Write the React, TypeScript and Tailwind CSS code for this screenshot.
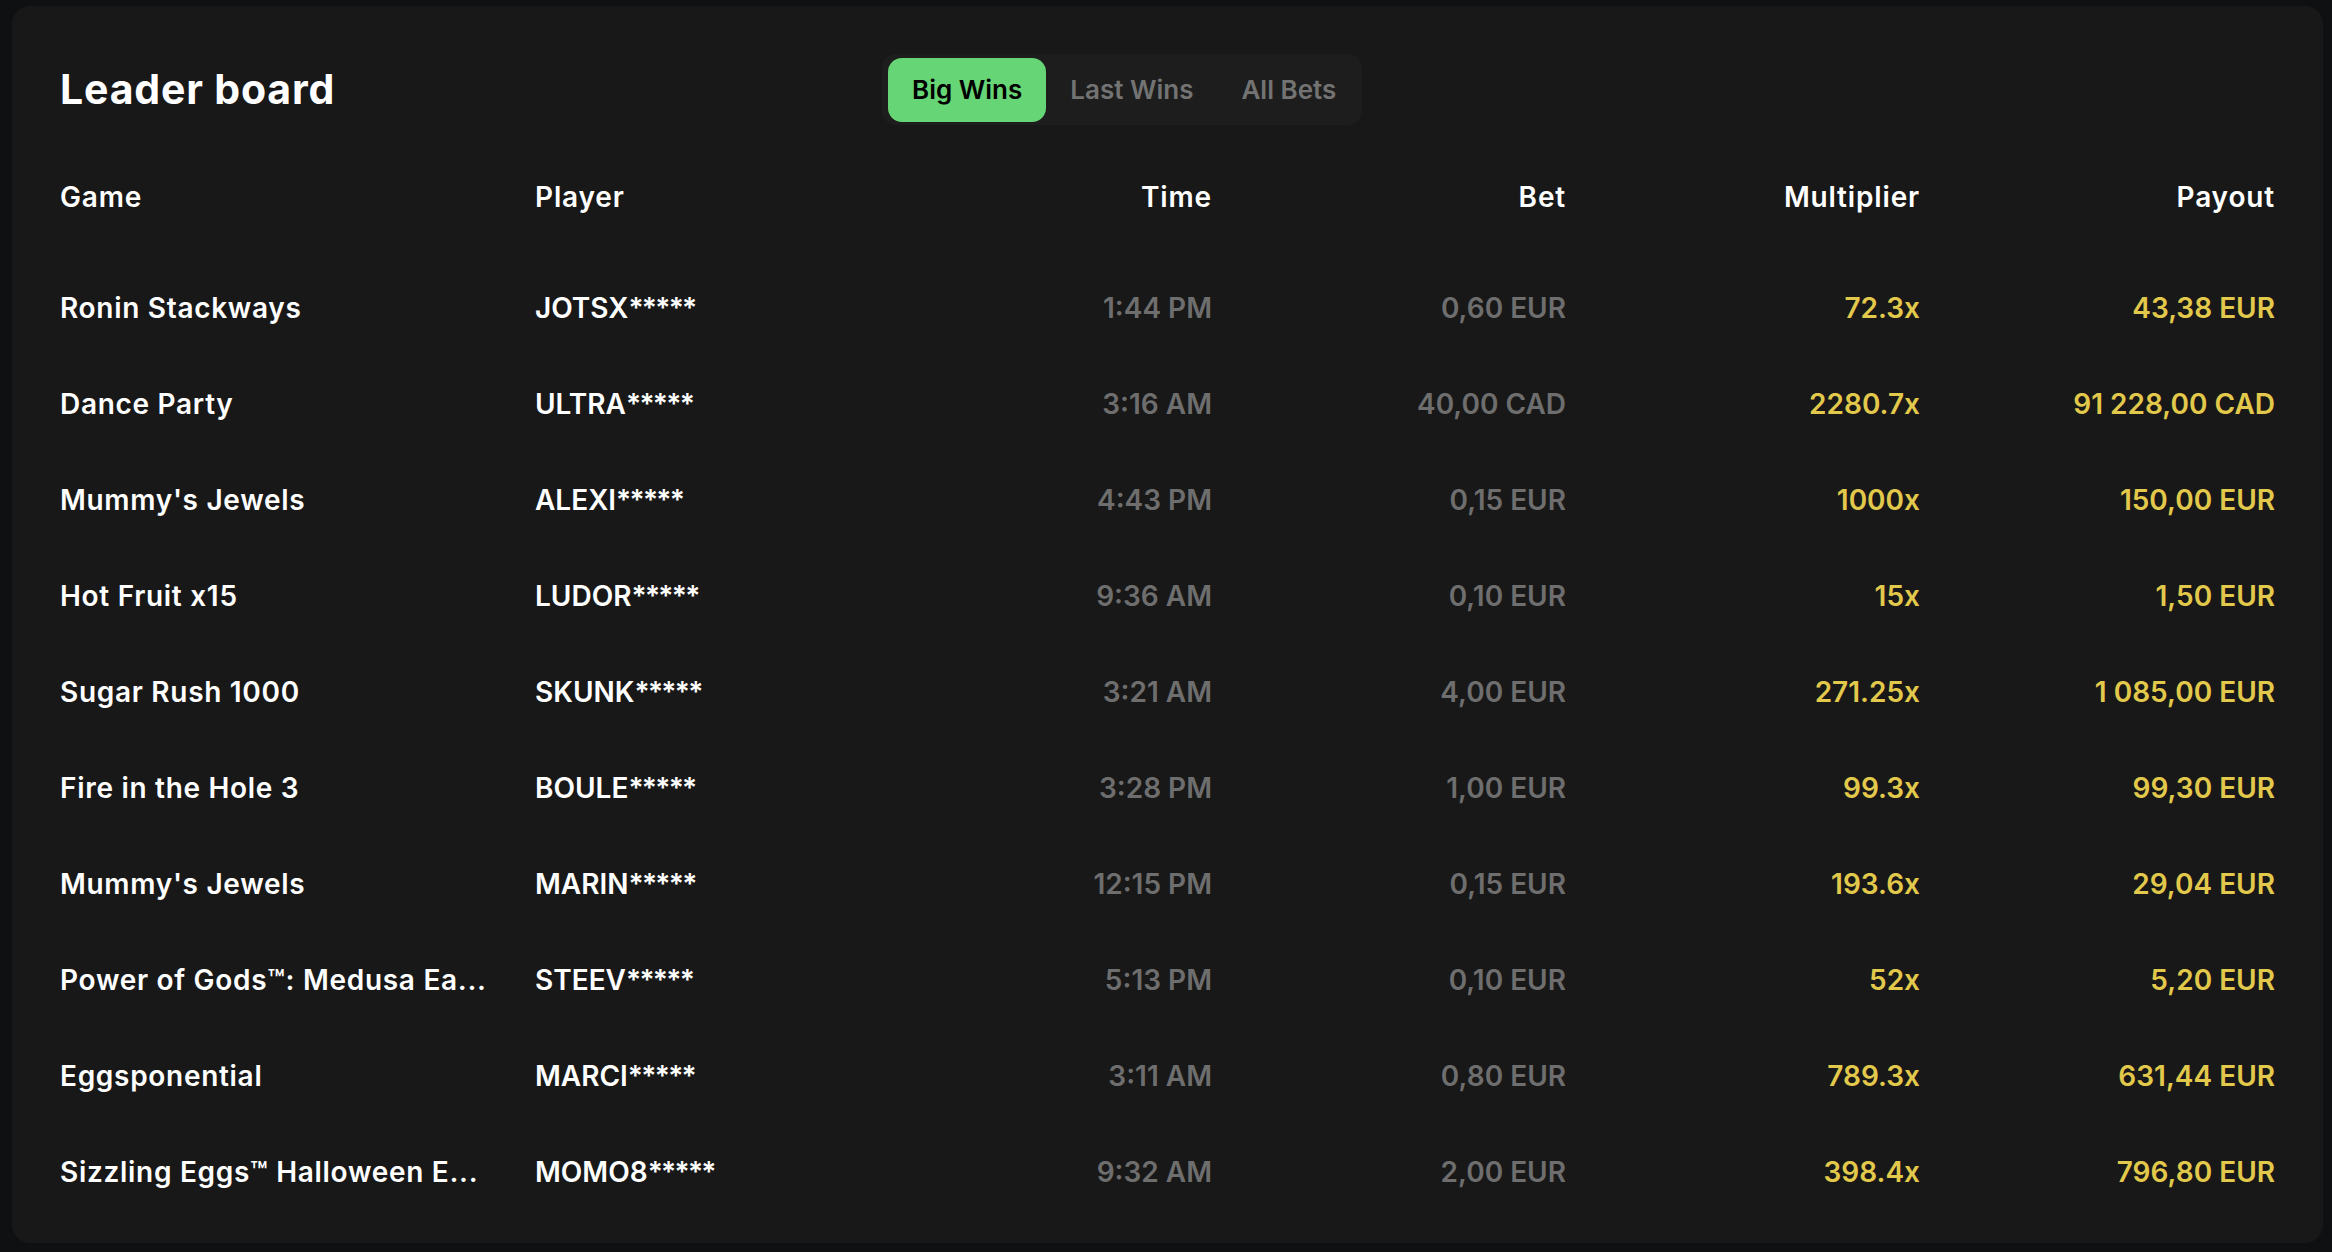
import { useState } from "react";

type Row = {
  game: string;
  player: string;
  time: string;
  bet: string;
  multiplier: string;
  payout: string;
};

const rows: Row[] = [
  { game: "Ronin Stackways", player: "JOTSX", time: "1:44 PM", bet: "0,60 EUR", multiplier: "72.3x", payout: "43,38 EUR" },
  { game: "Dance Party", player: "ULTRA", time: "3:16 AM", bet: "40,00 CAD", multiplier: "2280.7x", payout: "91 228,00 CAD" },
  { game: "Mummy's Jewels", player: "ALEXI", time: "4:43 PM", bet: "0,15 EUR", multiplier: "1000x", payout: "150,00 EUR" },
  { game: "Hot Fruit x15", player: "LUDOR", time: "9:36 AM", bet: "0,10 EUR", multiplier: "15x", payout: "1,50 EUR" },
  { game: "Sugar Rush 1000", player: "SKUNK", time: "3:21 AM", bet: "4,00 EUR", multiplier: "271.25x", payout: "1 085,00 EUR" },
  { game: "Fire in the Hole 3", player: "BOULE", time: "3:28 PM", bet: "1,00 EUR", multiplier: "99.3x", payout: "99,30 EUR" },
  { game: "Mummy's Jewels", player: "MARIN", time: "12:15 PM", bet: "0,15 EUR", multiplier: "193.6x", payout: "29,04 EUR" },
  { game: "Power of Gods™: Medusa Ea...", player: "STEEV", time: "5:13 PM", bet: "0,10 EUR", multiplier: "52x", payout: "5,20 EUR" },
  { game: "Eggsponential", player: "MARCI", time: "3:11 AM", bet: "0,80 EUR", multiplier: "789.3x", payout: "631,44 EUR" },
  { game: "Sizzling Eggs™ Halloween E...", player: "MOMO8", time: "9:32 AM", bet: "2,00 EUR", multiplier: "398.4x", payout: "796,80 EUR" },
];

const tabs = ["Big Wins", "Last Wins", "All Bets"];

const grid = "grid grid-cols-[475px_323px_354px_354px_354px_1fr] items-center";

export default function App() {
  const [tab, setTab] = useState("Big Wins");

  return (
    <div className="min-h-screen bg-[#0f1012] pt-[6px] pl-[12px] pr-[9px] pb-[9px] font-['Inter',sans-serif]">
      <div className="h-[1237px] rounded-[18px] bg-[#181818] px-[48px] pt-[48px]">
        {/* title + tabs */}
        <div className="flex h-[71px] items-center">
          <h1 className="w-[822px] text-[41px] font-bold leading-none tracking-[0.02em] text-white">
            Leader board
          </h1>
          <div className="flex h-[71px] items-center rounded-[14px] bg-[#1d1d1d] py-[4px] pl-[6px] pr-[2px]">
            {tabs.map((t) => (
              <button
                key={t}
                onClick={() => setTab(t)}
                className={
                  t === tab
                    ? "h-[64px] rounded-[14px] bg-[#66d575] px-[24px] text-[26px] font-semibold text-black"
                    : "h-[64px] rounded-[14px] px-[24px] text-[26px] font-semibold text-[#737373]"
                }
              >
                {t}
              </button>
            ))}
          </div>
        </div>

        {/* column headers */}
        <div className={`${grid} mt-[36px] h-[72px] text-[28px] font-semibold tracking-[0.03em] text-white`}>
          <div>Game</div>
          <div>Player</div>
          <div className="text-right">Time</div>
          <div className="text-right">Bet</div>
          <div className="text-right">Multiplier</div>
          <div className="text-right">Payout</div>
        </div>

        {/* rows */}
        <div className="mt-[27px]">
          {rows.map((r, i) => (
            <div key={i} className={`${grid} h-[96px] text-[28px] font-semibold`}>
              <div className="truncate pr-[40px] tracking-[0.025em] text-white">{r.game}</div>
              <div className="text-white">
                {r.player}
                <span className="tracking-[-0.06em]">*****</span>
              </div>
              <div className="text-right text-[#6e6e6e]">{r.time}</div>
              <div className="text-right text-[#6e6e6e]">{r.bet}</div>
              <div className="text-right text-[#e2c94b]">{r.multiplier}</div>
              <div className="text-right text-[#e2c94b]">{r.payout}</div>
            </div>
          ))}
        </div>
      </div>
    </div>
  );
}
